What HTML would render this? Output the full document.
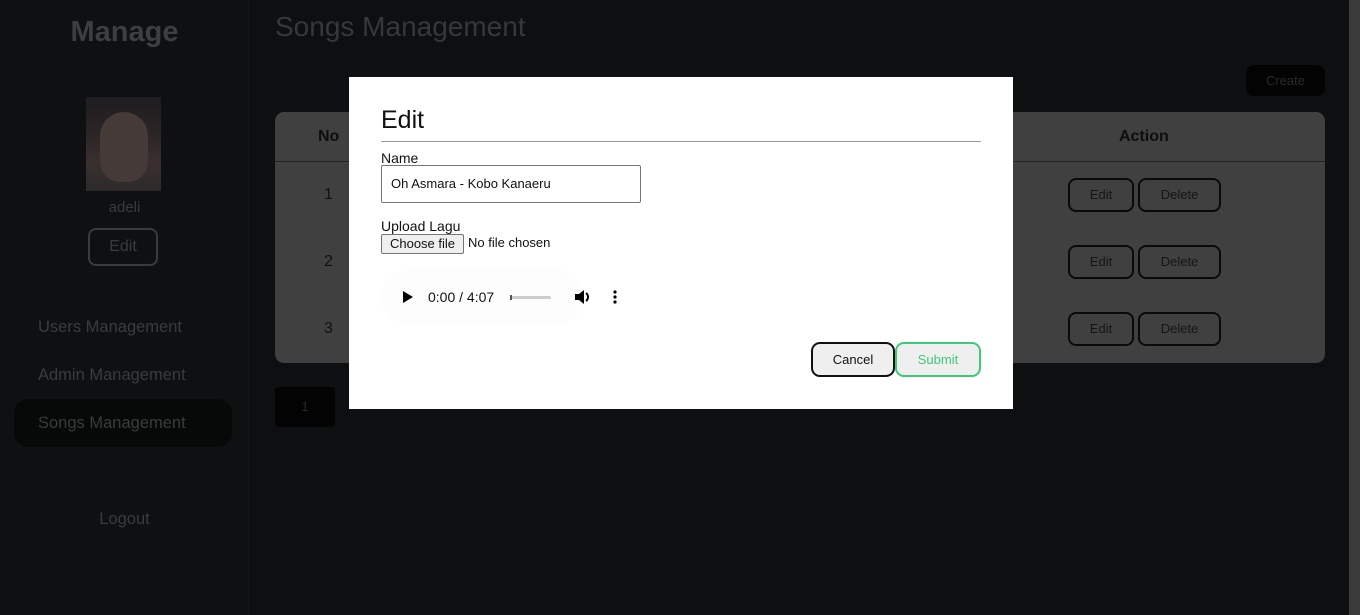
<!DOCTYPE html>
<html><head><meta charset="utf-8"><style>
*{box-sizing:border-box;margin:0;padding:0}
body{width:1360px;height:615px;overflow:hidden;background:#0e0f11;font-family:"Liberation Sans",sans-serif;position:relative}
.a{position:absolute}
.side{left:0;top:0;width:249px;height:615px;background:#0f1012;border-right:1px solid #151618}
.st{color:#3a3b3e;font-size:16.5px}
.btn{position:absolute;border:2px solid #0a0a0a;border-radius:8px;color:#151515;font-size:13px;text-align:center;line-height:30px;height:34px}
</style></head><body>
<div class="a side"></div>
<div class="a" style="left:0;width:249px;top:16px;text-align:center;font-size:29px;font-weight:bold;color:#3d3e41">Manage</div>
<div class="a" style="left:86px;top:97px;width:75px;height:94px;background:linear-gradient(180deg,#1e1d1f 0%,#2b2526 40%,#3a2f2f 70%,#2c2a2b 100%)"></div>
<div class="a" style="left:100px;top:112px;width:48px;height:70px;border-radius:24px 24px 20px 20px;background:#463a38"></div>
<div class="a st" style="left:0;width:249px;top:199px;text-align:center;font-size:15px">adeli</div>
<div class="a" style="left:88px;top:228px;width:70px;height:38px;border:2px solid #3a3b3e;border-radius:8px;color:#3a3b3e;font-size:16px;text-align:center;line-height:34px">Edit</div>
<div class="a st" style="left:38px;top:318px">Users Management</div>
<div class="a st" style="left:38px;top:366px">Admin Management</div>
<div class="a" style="left:14px;top:399px;width:218px;height:48px;border-radius:14px;background:#070808"></div>
<div class="a st" style="left:38px;top:414px">Songs Management</div>
<div class="a st" style="left:0;width:249px;text-align:center;top:510px">Logout</div>

<div class="a" style="left:275px;top:11px;font-size:28px;color:#36373a">Songs Management</div>
<div class="a" style="left:1246px;top:65px;width:79px;height:31px;border-radius:8px;background:#030303;color:#2a2a2a;font-size:13px;text-align:center;line-height:31px">Create</div>
<div class="a" style="left:275px;top:112px;width:1050px;height:251px;border-radius:9px;background:#404040"></div>
<div class="a" style="left:275px;top:161px;width:1050px;height:1px;background:#232323"></div>
<div class="a" style="left:318px;top:128px;font-weight:bold;font-size:16px;color:#0e0e0e">No</div>
<div class="a" style="left:1119px;top:128px;font-weight:bold;font-size:16px;color:#0e0e0e">Action</div>
<div class="a" style="left:324px;top:186px;font-size:16px;color:#111">1</div>
<div class="a" style="left:324px;top:253px;font-size:16px;color:#111">2</div>
<div class="a" style="left:324px;top:320px;font-size:16px;color:#111">3</div>
<div class="btn" style="left:1068px;top:178px;width:66px">Edit</div><div class="btn" style="left:1138px;top:178px;width:83px">Delete</div>
<div class="btn" style="left:1068px;top:245px;width:66px">Edit</div><div class="btn" style="left:1138px;top:245px;width:83px">Delete</div>
<div class="btn" style="left:1068px;top:312px;width:66px">Edit</div><div class="btn" style="left:1138px;top:312px;width:83px">Delete</div>
<div class="a" style="left:275px;top:387px;width:60px;height:40px;border-radius:4px;background:#030303;color:#2a2a2a;font-size:13px;text-align:center;line-height:40px">1</div>
<div class="a" style="left:1349px;top:0;width:11px;height:615px;background:#3b3b3b"></div>

<div class="a" style="left:349px;top:77px;width:664px;height:332px;background:#fff"></div>
<div class="a" style="left:381px;top:106px;font-size:25px;color:#111">Edit</div>
<div class="a" style="left:381px;top:141px;width:600px;height:1px;background:#999"></div>
<div class="a" style="left:381px;top:150px;font-size:14px;color:#111">Name</div>
<div class="a" style="left:381px;top:165px;width:260px;height:38px;border:1px solid #767676;border-radius:2px;padding-left:9px;line-height:36px;font-size:13px;color:#111">Oh Asmara - Kobo Kanaeru</div>
<div class="a" style="left:381px;top:218px;font-size:14px;color:#111">Upload Lagu</div>
<div class="a" style="left:381px;top:234px;width:83px;height:20px;border:1px solid #767676;border-radius:2px;background:#efefef;font-size:13px;text-align:center;line-height:18px;color:#111">Choose file</div>
<div class="a" style="left:468px;top:235px;font-size:13px;color:#111">No file chosen</div>
<div class="a" style="left:381px;top:270px;width:204px;height:54px;border-radius:27px;background:#fdfdfd"></div>
<svg class="a" style="left:402px;top:290px" width="12" height="14"><path d="M1 1 L11 7 L1 13Z" fill="#000"/></svg>
<div class="a" style="left:428px;top:289px;font-size:14px;color:#111">0:00 / 4:07</div>
<div class="a" style="left:510px;top:296px;width:41px;height:3px;background:#ccc;border-radius:2px"></div>
<div class="a" style="left:510px;top:295px;width:2px;height:5px;background:#555"></div>
<svg class="a" style="left:574px;top:288px" width="18" height="18"><path d="M1 6h4l5-4v14l-5-4H1z" fill="#000"/><path d="M12 5a5 5 0 010 8" stroke="#000" stroke-width="2" fill="none"/></svg>
<svg class="a" style="left:612px;top:289px" width="6" height="16"><circle cx="3" cy="3" r="1.6"/><circle cx="3" cy="8" r="1.6"/><circle cx="3" cy="13" r="1.6"/></svg>
<div class="a" style="left:811px;top:342px;width:84px;height:35px;border:2px solid #111;border-radius:9px;background:#efefef;text-align:center;line-height:31px;font-size:13px;color:#111">Cancel</div>
<div class="a" style="left:895px;top:342px;width:86px;height:35px;border:2px solid #3ec97a;border-radius:9px;background:#efefef;text-align:center;line-height:31px;font-size:13px;color:#3ec97a">Submit</div>
</body></html>
